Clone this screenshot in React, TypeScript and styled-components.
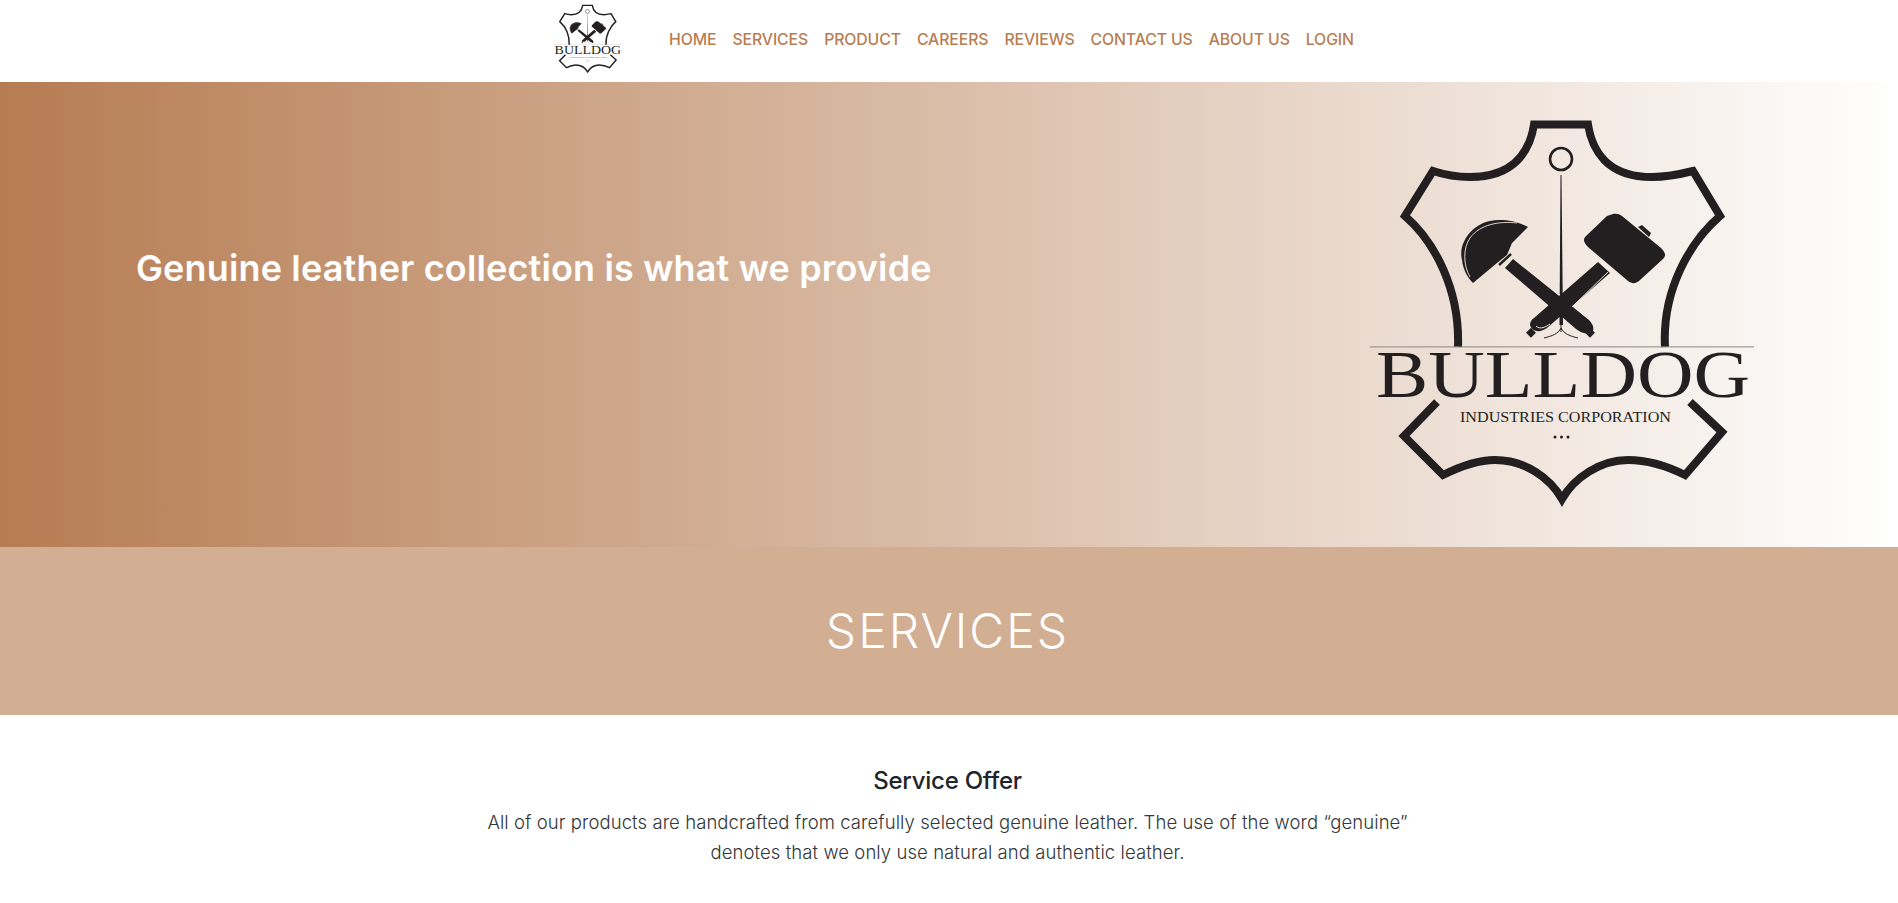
import React from "react";
import styled, { createGlobalStyle } from "styled-components";

const Global = createGlobalStyle`
  html, body { margin: 0; padding: 0; background: #fff; }
  body { font-family: Inter, "Open Sans", "Liberation Sans", sans-serif; }
`;

const Page = styled.div`
  width: 100%;
  min-height: 903px;
  display: flex;
  flex-direction: column;
`;
const Header = styled.header`
  height: 82px;
  display: flex;
  align-items: center;
  padding-left: 550px;
  gap: 44px;
  background: #fff;
`;
const HeaderLogo = styled.div`
  margin-bottom: 5px;
`;
const Nav = styled.nav`
  display: flex;
  align-items: center;
  gap: 16px;
  margin-bottom: 3px;
`;
const NavLink = styled.a`
  color: #b87d52;
  font-size: 15.8px;
  font-weight: 500;
  letter-spacing: -0.1px;
  text-decoration: none;
  white-space: nowrap;
`;
const Hero = styled.section`
  height: 465px;
  background: linear-gradient(90deg, #b67c52 0%, #fff 100%);
  display: flex;
  justify-content: space-between;
  padding: 18px 126px 0 136px;
  box-sizing: border-box;
`;
const HeroTitle = styled.h1`
  margin: 0;
  padding-top: 144px;
  color: #fff;
  font-size: 36px;
  font-weight: 600;
  line-height: 48px;
  letter-spacing: 0.15px;
  white-space: nowrap;
`;
const Band = styled.section`
  height: 168px;
  padding-right: 3px;
  background: #d2ae93;
  display: flex;
  align-items: center;
  justify-content: center;
`;
const BandTitle = styled.h2`
  margin: 0 0 2px;
  color: #fff;
  font-size: 48px;
  font-weight: 300;
  letter-spacing: 2px;
`;
const Offer = styled.section`
  padding: 50px 3px 38px 0;
  display: flex;
  flex-direction: column;
  align-items: center;
`;
const OfferTitle = styled.h3`
  margin: 0 0 10px;
  color: #212529;
  font-size: 24px;
  line-height: 32px;
  font-weight: 500;
  letter-spacing: -0.25px;
`;
const OfferText = styled.p`
  margin: 0;
  width: 950px;
  text-align: center;
  color: #33373b;
  font-size: 18.5px;
  line-height: 30px;
  font-weight: 300;
  letter-spacing: 0.08px;
`;

const INK = "#231f20";

function Logo({ size }: { size: number }) {
  return (
    <svg width={size} height={size * (420 / 422)} viewBox="0 0 422 420" style={{ display: "block", flex: "none" }} aria-label="Bulldog Industries Corporation">
      <g fill="none" stroke={INK} strokeWidth={8} strokeMiterlimit={10}>
        <path d="M108 247 C110 190 85 142 55 116 L83 71 C95 75 105 77 120 77 C165 77 180 50 184 24.500 H238 C242 50 257 77 302 77 C317 77 327 75 343 71 L370 116 C340 142 312 190 315 247" />
        <path d="M87 302 L54 336 L93 375 C115 364 130 360 145 360 C175 360 200 378 212 399 C224 378 250 360 278 360 C295 360 315 365 335 375 L372 332 L340 302" />
      </g>
      <circle cx={211} cy={59} r={11} fill="none" stroke={INK} strokeWidth={2.6} />
      <path d="M210.500 75 L211.500 75 L213 225 L209.500 225 Z" fill={INK} />
      <path d="M178 127 C165 120 150 119 140 121 C120 125 108 145 112 160 C113 170 118 178 123 183 L147 163 L157 155 L162 143 Z" fill={INK} />
      <path d="M167 123 C150 121 130 124 120 138 C113 148 113 165 120 177" fill="none" stroke="#f3e8df" strokeWidth={0.9} />
      <path d="M149 165 L161 154" stroke={INK} strokeWidth={2.4} fill="none" />
      <path d="M155 168 L163 159 L239 220 C245 226 245 233 238 233.500 C233 234 229 231 226 229 Z" fill={INK} />
      <path d="M166 158 L236 217" stroke="#f3e8df" strokeWidth={1} />
      <rect x={237} y={229} width={7} height={7} transform="rotate(45 240 232)" fill={INK} />
      <path d="M263 114 C268 113 270 115 272 116 L311 148 C316 153 316 156 313 159 L290 180 C286 184 282 184 278 181 L238 147 C233 142 233 139 236 136 L257 116 Z" fill={INK} />
      <path d="M288 127 L292 125 L301 133 L299 137 Z" fill={INK} />
      <path d="M248 162 L260 173 L197 228 C190 233 182 232 180 225 C180 222 181 220 184 218 Z" fill={INK} />
      <path d="M258 172 L222 207 M186 226 C190 230 196 227 200 224" stroke="#f3e8df" strokeWidth={1} fill="none" />
      <rect x={178} y={229} width={7} height={7} transform="rotate(45 181 232)" fill={INK} />
      <path d="M211 222 V232 M194 238 C202 236 208 234 211 228 C214 234 220 236 228 238" stroke={INK} strokeWidth={1} fill="none" />
      <rect x={20} y={246.400} width={384} height={1} fill="#8d8885" />
      <text x={26} y={297} textLength={374} lengthAdjust="spacingAndGlyphs" fontFamily="'Liberation Serif', serif" fontSize={67} fill={INK}>BULLDOG</text>
      <text x={110} y={322} textLength={211} lengthAdjust="spacingAndGlyphs" fontFamily="'Liberation Serif', serif" fontSize={15} fill={INK}>INDUSTRIES CORPORATION</text>
      <circle cx={205} cy={337} r={1.500} fill={INK} />
      <circle cx={211.500} cy={337} r={1.500} fill={INK} />
      <circle cx={218} cy={337} r={1.500} fill={INK} />
    </svg>
  );
}

const links = ["HOME", "SERVICES", "PRODUCT", "CAREERS", "REVIEWS", "CONTACT US", "ABOUT US", "LOGIN"];

export default function App() {
  return (
    <Page>
      <Global />
      <Header>
        <HeaderLogo>
          <Logo size={75} />
        </HeaderLogo>
        <Nav>
          {links.map((l) => (
            <NavLink key={l} href="#">{l}</NavLink>
          ))}
        </Nav>
      </Header>
      <Hero>
        <HeroTitle>Genuine leather collection is what we provide</HeroTitle>
        <Logo size={422} />
      </Hero>
      <Band>
        <BandTitle>SERVICES</BandTitle>
      </Band>
      <Offer>
        <OfferTitle>Service Offer</OfferTitle>
        <OfferText>
          All of our products are handcrafted from carefully selected genuine leather. The use of the word “genuine” denotes that we only use natural and authentic leather.
        </OfferText>
      </Offer>
    </Page>
  );
}
